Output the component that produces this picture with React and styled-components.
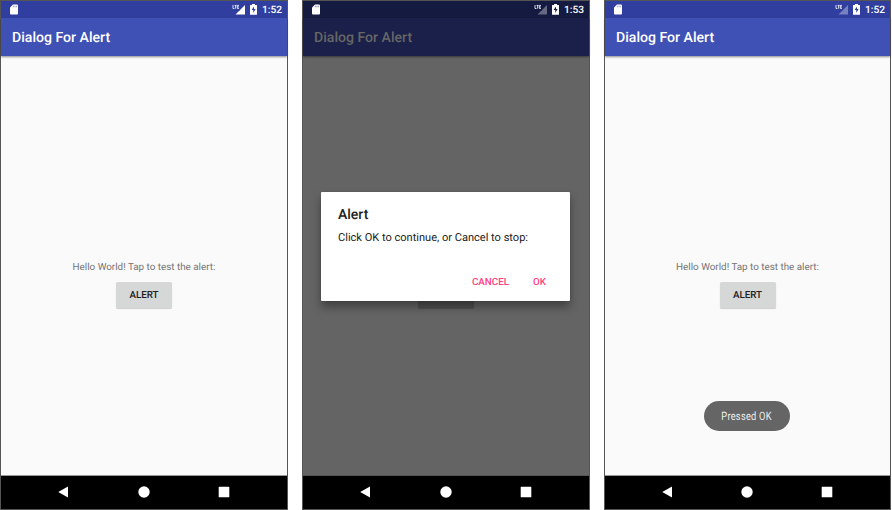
import React from "react";
import styled, { createGlobalStyle } from "styled-components";

const GlobalStyle = createGlobalStyle`
  * { box-sizing: border-box; }
  body {
    margin: 0;
    background: #fff;
    font-family: Roboto, sans-serif;
    text-rendering: geometricPrecision;
    overflow: hidden;
  }
`;

const Board = styled.main`
  display: flex;
  gap: 14px;
  width: 892px;
  height: 510px;
`;

const Phone = styled.section`
  position: relative;
  display: flex;
  flex-direction: column;
  flex: none;
  width: ${(p) => p.$width}px;
  height: 510px;
  border: 1px solid #555;
  background: #fafafa;
  white-space: nowrap;
`;

const StatusBar = styled.header`
  display: flex;
  align-items: center;
  height: 17px;
  padding: 0 5px 0 8px;
  background: ${(p) => (p.$dim ? "#141a40" : "#303f9f")};
  color: #fff;
`;

const StatusIcons = styled.div`
  display: flex;
  align-items: center;
  margin-left: auto;
`;

const Network = styled.svg`
  width: 14px;
  height: 11px;
`;

const Battery = styled.svg`
  width: 7px;
  height: 11px;
  margin-left: 4px;
`;

const CardIcon = styled.svg`
  width: 10px;
  height: 11px;
  margin-left: -0.5px;
`;

const Clock = styled.time`
  width: 20px;
  height: 17px;
  margin-left: 5px;
  font-size: 10.2px;
  font-weight: 500;
  line-height: 19px;
`;

const AppBar = styled.h1`
  position: relative;
  margin: 0;
  height: 38px;
  padding-left: 11px;
  background: ${(p) => (p.$dim ? "#1a2049" : "#3f51b5")};
  color: ${(p) => (p.$dim ? "#666" : "#fff")};
  font-size: 14.1px;
  font-weight: 500;
  line-height: 41px;
  box-shadow: 0 1px 2px rgba(0, 0, 0, 0.45);
`;

const Content = styled.div`
  display: flex;
  flex: 1;
  flex-direction: column;
  align-items: center;
  padding-top: 203px;
  background: ${(p) => (p.$dim ? "#646464" : "#fafafa")};
  border-bottom: 1px solid ${(p) => (p.$dim ? "#555" : "#999")};
`;

const Greeting = styled.p`
  margin: 0;
  height: 16px;
  font-size: 9.85px;
  line-height: 18px;
  color: #757575;
  visibility: ${(p) => (p.$dim ? "hidden" : "visible")};
`;

const RaisedButton = styled.button`
  width: 56px;
  height: 26px;
  margin-top: 7px;
  padding: 2px 0 0;
  border: 0;
  border-radius: 1.5px;
  background: ${(p) => (p.$dim ? "#505050" : "#d6d7d7")};
  color: #212121;
  font: 500 9.8px/24px Roboto, sans-serif;
  text-rendering: inherit;
  box-shadow: 0 1px 1px rgba(0, 0, 0, 0.18);
`;

const NavBar = styled.nav`
  display: flex;
  align-items: center;
  justify-content: space-between;
  height: 33px;
  padding: 0 57px 1px 56px;
  background: #000;
`;

const NavIcon = styled.svg`
  width: 12px;
  height: 12px;
  fill: #fff;
`;

const Dialog = styled.div`
  position: absolute;
  top: 191px;
  left: 18px;
  display: flex;
  flex-direction: column;
  width: 249px;
  height: 109px;
  padding: 13px 16px 8px 17px;
  border-radius: 1px;
  background: #fff;
  color: #222;
  box-shadow: 0 6px 10px rgba(0, 0, 0, 0.36), 0 0 2px rgba(0, 0, 0, 0.15);
`;

const DialogTitle = styled.h2`
  margin: 0;
  height: 20px;
  font-size: 14px;
  font-weight: 500;
  line-height: 21px;
`;

const DialogText = styled.p`
  margin: 4px 0 0;
  font-size: 11.05px;
  line-height: 17px;
`;

const DialogActions = styled.div`
  display: flex;
  justify-content: flex-end;
  gap: 24px;
  margin-top: auto;
  padding-right: 8px;
`;

const FlatButton = styled.button`
  padding: 0;
  border: 0;
  background: none;
  color: #ff4081;
  font: 500 9.8px/20px Roboto, sans-serif;
  text-rendering: inherit;
`;

const Toast = styled.div`
  position: absolute;
  top: 400px;
  left: 99px;
  display: flex;
  align-items: center;
  justify-content: center;
  width: 86px;
  height: 30px;
  border-radius: 15px;
  background: #656565;
  color: #eee;
  font-size: 11.6px;
`;

const ToastText = styled.span`
  transform: scaleX(0.8);
  letter-spacing: 0.3px;
`;

function StatusRow({ time, dim, weakSignal }) {
  return (
    <StatusBar $dim={dim}>
      <CardIcon viewBox="0 0 10 11">
        <path fill="#fff" d="M4 .5h4q1 0 1 1v8q0 1-1 1H2q-1 0-1-1v-6z" />
        <path stroke={dim ? "#141a40" : "#303f9f"} strokeWidth=".7" opacity=".65" d="M4.4 1.7v1.6M6 1.7v1.6M7.6 1.7v1.6" />
      </CardIcon>
      <StatusIcons>
        <Network viewBox="0 0 14 11">
          <path fill="#fff" fillOpacity={weakSignal ? 0.35 : 1} d="M13 1v9.5H3.5z" />
          <path fill="none" stroke={dim ? "#141a40" : "#303f9f"} strokeWidth="1.5" d="M0 5.7h8" />
          <path fill="none" stroke="#fff" strokeWidth=".9" opacity=".9" d="M1 1v3.5h1.5M2.6 1.4h2M3.6 1.4v3.2M7 1.4H5.3v3H7M5.3 2.9h1.5" />
        </Network>
        <Battery viewBox="0 0 7 11">
          <path fill="#fff" d="M2 0h3v1h1.5q.5 0 .5.5v8.7q0 .5-.5.5h-6q-.5 0-.5-.5V1.5Q0 1 .5 1H2z" />
          <path fill={dim ? "#141a40" : "#303f9f"} d="M4 2.5 1.6 6.1h1.7V9l2.3-4H4z" />
        </Battery>
        <Clock>{time}</Clock>
      </StatusIcons>
    </StatusBar>
  );
}

function Screen({ width = 288, time = "1:52", dim, weakSignal, children }) {
  return (
    <Phone $width={width}>
      <StatusRow time={time} dim={dim} weakSignal={weakSignal} />
      <AppBar $dim={dim}>Dialog For Alert</AppBar>
      <Content $dim={dim}>
        <Greeting $dim={dim}>Hello World! Tap to test the alert:</Greeting>
        <RaisedButton $dim={dim}>{dim ? "" : "ALERT"}</RaisedButton>
      </Content>
      <NavBar>
        <NavIcon viewBox="0 0 12 12"><path d="M1.2 6 11 .6v10.8z" /></NavIcon>
        <NavIcon viewBox="0 0 12 12"><circle cx="6" cy="6" r="5.7" /></NavIcon>
        <NavIcon viewBox="0 0 12 12"><rect x=".7" y=".7" width="10.6" height="10.6" rx=".4" /></NavIcon>
      </NavBar>
      {children}
    </Phone>
  );
}

export default function App() {
  return (
    <>
      <GlobalStyle />
      <Board>
        <Screen />
        <Screen time="1:53" dim weakSignal>
          <Dialog role="dialog">
            <DialogTitle>Alert</DialogTitle>
            <DialogText>Click OK to continue, or Cancel to stop:</DialogText>
            <DialogActions>
              <FlatButton>CANCEL</FlatButton>
              <FlatButton>OK</FlatButton>
            </DialogActions>
          </Dialog>
        </Screen>
        <Screen width={287} weakSignal>
          <Toast><ToastText>Pressed OK</ToastText></Toast>
        </Screen>
      </Board>
    </>
  );
}
